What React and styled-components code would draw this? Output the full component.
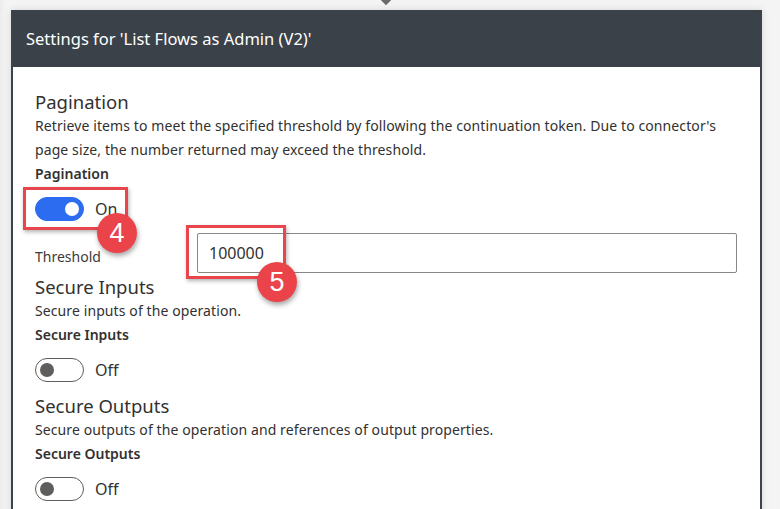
import styled, { createGlobalStyle } from 'styled-components';

const GlobalStyle = createGlobalStyle`
  html, body {
    margin: 0;
    padding: 0;
    background: #f3f3f3;
    font-family: 'Noto Sans', 'Open Sans', sans-serif;
    color: #323130;
  }
  * { box-sizing: border-box; }
`;

function Toggle({ on }) {
  return (
    <ToggleRow>
      <Track $on={on}>
        <Knob $on={on} />
      </Track>
      <ToggleText>{on ? 'On' : 'Off'}</ToggleText>
    </ToggleRow>
  );
}

export default function App() {
  return (
    <Page>
      <GlobalStyle />
      <Arrow width="22" height="14" viewBox="0 0 22 14">
        <path d="M11 -6 V8 M3 0 L11 8 L19 0" fill="none" stroke="#6b6b6b" strokeWidth="3.2" />
      </Arrow>
      <Card>
        <Header>Settings for 'List Flows as Admin (V2)'</Header>
        <Body>
          <Section>
            <Title>Pagination</Title>
            <Desc>
              Retrieve items to meet the specified threshold by following the continuation token. Due to connector's
              page size, the number returned may exceed the threshold.
            </Desc>
            <Label>Pagination</Label>
            <Toggle on />
            <ThresholdRow>
              <SubLabel>Threshold</SubLabel>
              <Input defaultValue="100000" />
            </ThresholdRow>
          </Section>
          <Section>
            <Title>Secure Inputs</Title>
            <Desc>Secure inputs of the operation.</Desc>
            <Label>Secure Inputs</Label>
            <Toggle on={false} />
          </Section>
          <Section>
            <Title>Secure Outputs</Title>
            <Desc>Secure outputs of the operation and references of output properties.</Desc>
            <Label>Secure Outputs</Label>
            <Toggle on={false} />
          </Section>
        </Body>
      </Card>

      <Highlight style={{ left: 23, top: 187, width: 105, height: 43 }} />
      <Badge style={{ left: 97, top: 213 }}>4</Badge>
      <Highlight style={{ left: 186, top: 225, width: 100, height: 54 }} />
      <Badge style={{ left: 257, top: 262 }}>5</Badge>
    </Page>
  );
}

const Page = styled.div`
  position: relative;
  width: 780px;
  height: 509px;
  overflow: hidden;
  padding: 10px 0 0 11px;
  background: linear-gradient(to right, #ececec 0, #f4f4f4 6px, #f4f4f4 100%);
`;

const Arrow = styled.svg`
  position: absolute;
  left: 375px;
  top: -5px;
`;

const Card = styled.div`
  width: 751px;
  min-height: 520px;
  background: #fff;
  border-left: 2px solid #3c4249;
  border-right: 2px solid #3c4249;
  box-shadow: 0 0 8px rgba(0, 0, 0, 0.12);
`;

const Header = styled.div`
  height: 57px;
  background: #3b4148;
  color: #fff;
  font-size: 16.5px;
  line-height: 57px;
  padding-left: 13px;
`;

const Body = styled.div`
  padding: 23px 23px 0 22px;
`;

const Section = styled.div`
  display: flex;
  flex-direction: column;
`;

const Title = styled.div`
  font-size: 18.5px;
  line-height: 24px;
  color: #323130;
`;

const Desc = styled.div`
  font-size: 14px;
  letter-spacing: 0.1px;
  line-height: 24px;
  color: #323130;
`;

const Label = styled.div`
  font-size: 14px;
  font-weight: 600;
  line-height: 24px;
  color: #323130;
`;

const ToggleRow = styled.div`
  display: flex;
  align-items: center;
  gap: 11px;
  margin: 11px 0 12px;
`;

const Track = styled.div`
  width: 49px;
  height: 24px;
  border-radius: 12px;
  display: flex;
  align-items: center;
  padding: 0 4px;
  justify-content: ${({ $on }) => ($on ? 'flex-end' : 'flex-start')};
  background: ${({ $on }) => ($on ? '#2b6cf0' : '#fff')};
  border: 1px solid ${({ $on }) => ($on ? '#2b6cf0' : '#605e5c')};
`;

const Knob = styled.div`
  width: 14px;
  height: 14px;
  border-radius: 50%;
  background: ${({ $on }) => ($on ? '#fff' : '#605e5c')};
`;

const ToggleText = styled.span`
  font-size: 16px;
  color: #323130;
`;

const ThresholdRow = styled.div`
  display: grid;
  grid-template-columns: 162px 1fr;
  align-items: center;
  margin: 0 0 2px;
`;

const SubLabel = styled.div`
  font-size: 14px;
  color: #3b3a39;
  padding-top: 6px;
`;

const Input = styled.input`
  height: 40px;
  border: 1px solid #8a8886;
  border-radius: 2px;
  padding: 0 11px;
  font-family: inherit;
  font-size: 16px;
  color: #323130;
  outline: none;
`;

const Highlight = styled.div`
  position: absolute;
  border: 3px solid #e8464c;
  box-shadow: 1px 2px 4px rgba(0, 0, 0, 0.3);
`;

const Badge = styled.div`
  position: absolute;
  width: 40px;
  height: 40px;
  border-radius: 50%;
  background: #ea444a;
  color: #fff;
  font-family: 'Liberation Sans', Arial, sans-serif;
  font-size: 27px;
  display: flex;
  align-items: center;
  justify-content: center;
  box-shadow: 1px 3px 5px rgba(0, 0, 0, 0.35);
`;
